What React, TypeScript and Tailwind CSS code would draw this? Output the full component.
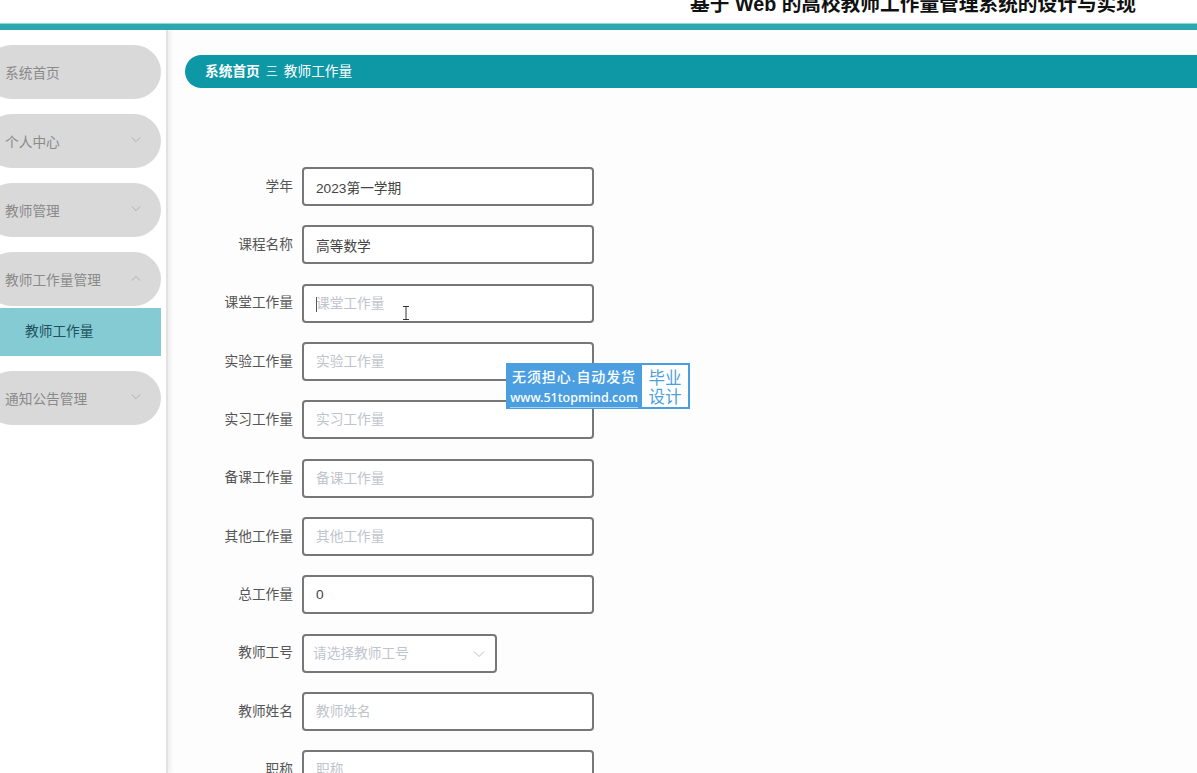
import React from 'react';

const FONT = "font-['Liberation_Sans','Noto_Sans_CJK_SC',sans-serif]";

const menu = [
  { title: '系统首页', arrow: null },
  { title: '个人中心', arrow: 'down' },
  { title: '教师管理', arrow: 'down' },
  { title: '教师工作量管理', arrow: 'up', children: ['教师工作量'] },
  { title: '通知公告管理', arrow: 'down' },
];

const fields = [
  { label: '学年', value: '2023第一学期' },
  { label: '课程名称', value: '高等数学' },
  { label: '课堂工作量', placeholder: '课堂工作量', focused: true },
  { label: '实验工作量', placeholder: '实验工作量' },
  { label: '实习工作量', placeholder: '实习工作量' },
  { label: '备课工作量', placeholder: '备课工作量' },
  { label: '其他工作量', placeholder: '其他工作量' },
  { label: '总工作量', value: '0' },
  { label: '教师工号', placeholder: '请选择教师工号', select: true },
  { label: '教师姓名', placeholder: '教师姓名' },
  { label: '职称', placeholder: '职称' },
];

const Chevron = ({ up, className }: { up?: boolean; className: string }) => (
  <svg viewBox="0 0 12 7" fill="none" stroke="currentColor" strokeWidth="1" className={className}>
    <path d={up ? 'M1 6.5 6 1.5l5 5' : 'M1 .5l5 5 5-5'} />
  </svg>
);

const Sidebar = () => (
  <aside className="w-[168px] shrink-0 pt-[15px] bg-white border-r-2 border-[#e2e2e2] shadow-[2px_0_5px_rgba(0,0,0,0.08)] z-10">
    {menu.map((item) => (
      <div key={item.title} className="mb-[15px]">
        <div className="-ml-[15px] w-[176px] h-[54px] pl-5 pr-[20px] flex items-center justify-between rounded-[27px] bg-[#d9d9d9] text-[13.7px] text-[#8a8a8a]">
          <span className="mt-[4px]">{item.title}</span>
          {item.arrow && <Chevron up={item.arrow === 'up'} className="w-[10px] h-[6px] mb-[3px] text-[#a8a8a8]" />}
        </div>
        {item.children?.map((child) => (
          <div key={child} className="mt-[2px] mb-[2px] w-[161px] h-[48px] pl-[25px] pt-[1px] flex items-center bg-[#85cbd4] text-[13.7px] text-[#20505c]">
            {child}
          </div>
        ))}
      </div>
    ))}
  </aside>
);

const Field = ({ label, value, placeholder, select, focused }: (typeof fields)[number] & { select?: boolean; focused?: boolean; value?: string; placeholder?: string }) => (
  <div className="flex items-center h-[39px] shrink-0">
    <label className="w-[107px] pr-[9px] pt-[1px] text-right text-[13.7px] text-[#555]">{label}</label>
    <div className={`relative h-[39px] ${select ? 'w-[195px]' : 'w-[292px]'} rounded-[4px] border-2 border-[#777] bg-white`}>
      <input
        readOnly
        defaultValue={value}
        placeholder={placeholder}
        className={`w-full h-full ${select ? 'pl-[9px]' : 'pl-[12px]'} pr-8 bg-transparent outline-none text-[13.7px] text-[#444] placeholder:text-[#c0c4cc]`}
      />
      {focused && <span className="absolute left-[12px] top-[11px] w-px h-[15px] bg-[#555]" />}
      {select && <Chevron className="absolute right-[10px] top-[15px] w-[12px] h-[7px] text-[#b8bcc4]" />}
    </div>
  </div>
);

export default function App() {
  return (
    <div className={`relative h-[773px] w-[1197px] overflow-hidden bg-[#fdfdfd] ${FONT}`}>
      <header className="h-[23px] overflow-hidden bg-white flex justify-end items-start pr-[61px]">
        <h1 className="text-[19.7px] leading-[26px] -mt-[9px] font-bold whitespace-nowrap text-[#111]">
          基于 Web 的高校教师工作量管理系统的设计与实现
        </h1>
      </header>
      <div className="h-[7px] bg-[#2ea6b0] border-t border-[#7fdde0]" />

      <div className="flex h-[743px] overflow-hidden">
        <Sidebar />
        <main className="flex-1 pl-[17px] pt-[25px]">
          <div className="h-[33px] -mr-4 pt-[1px] rounded-l-[17px] bg-[#0e98a6] flex items-center pl-5 text-[13.7px] text-white">
            <span className="font-bold">系统首页</span>
            <span className="mx-[6px] text-[#cdeef0] text-[12px]">三</span>
            <span>教师工作量</span>
          </div>
          <form className="mt-[79px] pl-[10px] flex flex-col gap-[19.35px]">
            {fields.map((f) => (
              <Field key={f.label} {...f} />
            ))}
          </form>
        </main>
      </div>

      {/* text cursor over the input */}
      <svg viewBox="0 0 8 14" className="absolute left-[402px] top-[306px] w-2 h-[14px] text-[#333]" fill="none" stroke="currentColor">
        <path d="M1 .5h6M4 .5v13M1 13.5h6" />
      </svg>

      {/* watermark */}
      <div className="absolute left-[506px] top-[363px] w-[184px] h-[46px] bg-[#4b9fe0] flex p-[2px] pl-0 text-white">
        <div className="flex-1 flex flex-col items-center justify-center pt-[3px]">
          <span className="text-[14px] leading-[21px] font-medium tracking-[0.9px] whitespace-nowrap">无须担心.自动发货</span>
          <span className="text-[12.5px] leading-[19px] font-['Noto_Sans',sans-serif] font-medium border-b border-[#a8d2f2] whitespace-nowrap">www.51topmind.com</span>
        </div>
        <div className="w-[46px] pt-[3px] bg-white text-[#4b9fe0] text-[16.5px] leading-[19px] flex items-center justify-center text-center">
          毕业
          <br />
          设计
        </div>
      </div>
    </div>
  );
}
